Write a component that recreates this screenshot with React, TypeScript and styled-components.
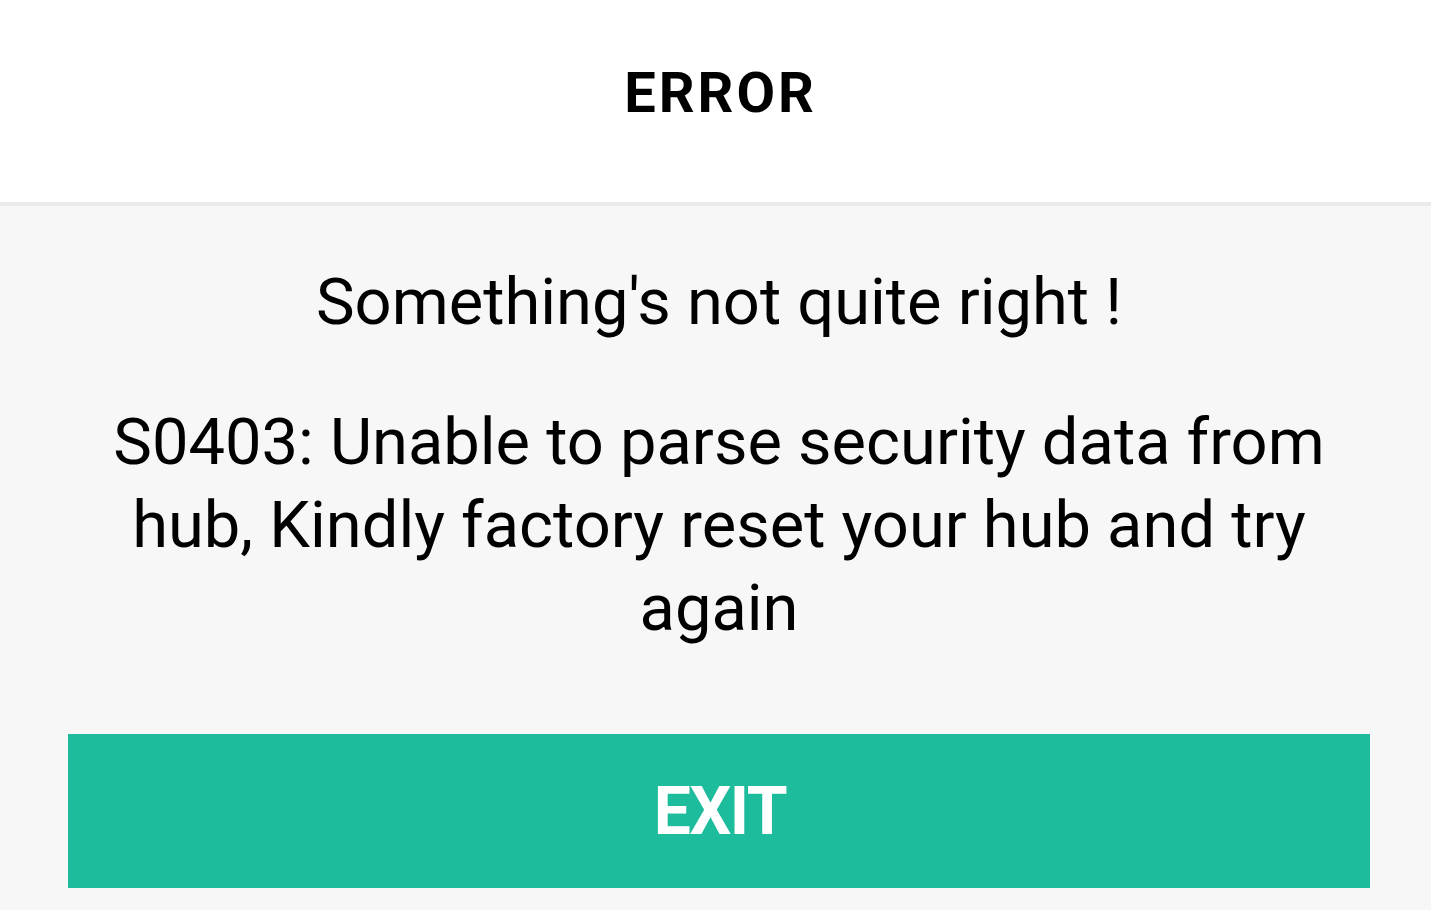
import React from "react";
import styled, { createGlobalStyle } from "styled-components";

const GlobalStyle = createGlobalStyle`
  html, body {
    margin: 0;
    padding: 0;
    background: #f7f7f7;
    font-family: Roboto, "Noto Sans", sans-serif;
  }
`;

const Page = styled.div`
  width: 100%;
  min-height: 910px;
  display: flex;
  flex-direction: column;
  background: #f7f7f7;
`;

const Header = styled.header`
  height: 142px;
  padding-top: 60px;
  background: #ffffff;
  border-bottom: 4px solid #ebebeb;
  display: flex;
  justify-content: center;
  align-items: flex-start;
`;

const Title = styled.h1`
  margin: 0;
  padding-left: 10px;
  font-size: 56px;
  font-weight: 700;
  letter-spacing: 3px;
  color: #000;
`;

const Body = styled.main`
  display: flex;
  flex-direction: column;
  align-items: center;
  padding: 55px 61px 0 68px;
`;

const Message = styled.p<{ $gap: number }>`
  margin: 0 0 ${(p) => p.$gap}px;
  font-size: 65px;
  line-height: 83px;
  color: #000;
  text-align: center;
`;

const ExitButton = styled.button`
  width: 100%;
  height: 154px;
  padding-left: 8px;
  border: none;
  background: #1cbc9c;
  color: #fff;
  font-family: Roboto, sans-serif;
  font-size: 66px;
  font-weight: 700;
  letter-spacing: -1.5px;
  cursor: pointer;
`;

export default function App() {
  return (
    <>
      <GlobalStyle />
      <Page>
        <Header>
          <Title>ERROR</Title>
        </Header>
        <Body>
          <Message $gap={57}>Something's not quite right !</Message>
          <Message $gap={84}>
            S0403: Unable to parse security data from hub, Kindly factory reset your hub and try again
          </Message>
          <ExitButton>EXIT</ExitButton>
        </Body>
      </Page>
    </>
  );
}
